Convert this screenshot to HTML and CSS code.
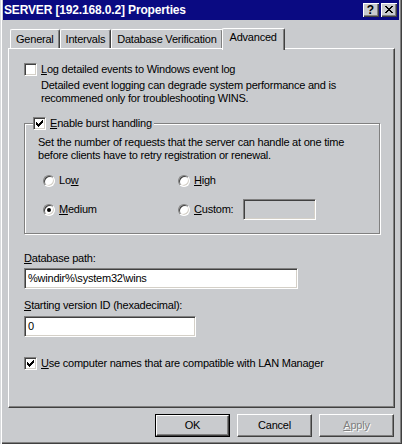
FILE: index.html
```html
<!DOCTYPE html>
<html>
<head>
<meta charset="utf-8">
<link rel="stylesheet" href="styles.css">
</head>
<body>
<div class="window">
  <div class="titlebar">
    <span class="title">SERVER [192.168.0.2] Properties</span>
    <div class="tbtns">
      <span class="tbtn help">?</span>
      <span class="tbtn close">
        <svg width="8" height="7" viewBox="0 0 8 7" shape-rendering="crispEdges">
          <path d="M0 0h2v1h-2zM6 0h2v1h-2zM1 1h2v1h-2zM5 1h2v1h-2zM2 2h4v1h-4zM3 3h2v1h-2zM2 4h4v1h-4zM1 5h2v1h-2zM5 5h2v1h-2zM0 6h2v1h-2zM6 6h2v1h-2z" fill="#000"/>
        </svg>
      </span>
    </div>
  </div>
  <div class="client">
    <div class="tabs">
      <span class="tab">General</span>
      <span class="tab">Intervals</span>
      <span class="tab">Database Verification</span>
      <span class="tab active">Advanced</span>
    </div>
    <div class="panel">
      <div class="check-row">
        <span class="cb"></span>
        <span class="lbl"><u>L</u>og detailed events to Windows event log</span>
      </div>
      <p class="note">Detailed event logging can degrade system performance and is<br>recommened only for troubleshooting WINS.</p>

      <fieldset class="group">
        <legend class="check-row legend">
          <span class="cb checked">
            <svg width="7" height="7" viewBox="0 0 7 7" shape-rendering="crispEdges"><path d="M0 2h1v3h-1zM1 3h1v3h-1zM2 4h1v3h-1zM3 3h1v3h-1zM4 2h1v3h-1zM5 1h1v3h-1zM6 0h1v3h-1z" fill="#000"/></svg>
          </span>
          <span class="lbl"><u>E</u>nable burst handling</span>
        </legend>
        <p class="group-text">Set the number of requests that the server can handle at one time<br>before clients have to retry registration or renewal.</p>
        <div class="radios">
          <div class="radio-row"><span class="rb"></span><span class="lbl">Lo<u>w</u></span></div>
          <div class="radio-row"><span class="rb"></span><span class="lbl"><u>H</u>igh</span></div>
          <div class="radio-row"><span class="rb on"></span><span class="lbl"><u>M</u>edium</span></div>
          <div class="radio-row"><span class="rb"></span><span class="lbl"><u>C</u>ustom:</span><span class="edit custom"></span></div>
        </div>
      </fieldset>

      <div class="field-label"><u>D</u>atabase path:</div>
      <div class="edit path">%windir%\system32\wins</div>
      <div class="field-label second"><u>S</u>tarting version ID (hexadecimal):</div>
      <div class="edit version">0</div>

      <div class="check-row last">
        <span class="cb checked">
          <svg width="7" height="7" viewBox="0 0 7 7" shape-rendering="crispEdges"><path d="M0 2h1v3h-1zM1 3h1v3h-1zM2 4h1v3h-1zM3 3h1v3h-1zM4 2h1v3h-1zM5 1h1v3h-1zM6 0h1v3h-1z" fill="#000"/></svg>
        </span>
        <span class="lbl"><u>U</u>se computer names that are compatible with LAN Manager</span>
      </div>
    </div>
    <div class="buttons">
      <span class="btn default"><span class="btn-in">OK</span></span>
      <span class="btn"><span class="btn-in">Cancel</span></span>
      <span class="btn disabled"><span class="btn-in"><u>A</u>pply</span></span>
    </div>
  </div>
</div>
</body>
</html>
```

FILE: styles.css
```css
* { box-sizing: border-box; }
html, body { margin: 0; padding: 0; }
body {
  width: 402px;
  height: 444px;
  overflow: hidden;
  background: #c9cbce;
  font-family: "Liberation Sans", Arial, sans-serif;
  font-size: 11px;
  line-height: 13px;
  letter-spacing: -0.22px;
  color: #000;
}
u { text-decoration: underline; text-underline-offset: 1px; text-decoration-thickness: 1px; }

.window {
  width: 402px;
  height: 444px;
  padding: 0 3px 3px 3px;
  display: flex;
  flex-direction: column;
  background: #c9cbce;
  box-shadow: inset 1px 0 0 #d8dadc, inset 2px 0 0 #ffffff, inset -1px -1px 0 #404040, inset -2px -2px 0 #808080;
}

.titlebar {
  height: 20px;
  background: #0a0a82;
  display: flex;
  align-items: center;
  justify-content: space-between;
  padding: 0 2px 0 1px;
}
.title {
  color: #fff;
  font-weight: bold;
  font-size: 12px;
  letter-spacing: -0.15px;
}
.tbtns { display: flex; gap: 2px; }
.tbtn {
  width: 16px;
  height: 14px;
  background: #c9cbce;
  box-shadow: inset 1px 1px 0 #fff, inset -1px -1px 0 #404040, inset -2px -2px 0 #808080;
  display: flex;
  align-items: center;
  justify-content: center;
  font-weight: bold;
  font-size: 12px;
  line-height: 14px;
  letter-spacing: 0;
}
.tbtn.help { padding-bottom: 1px; padding-right: 1px; }
.tbtn.close svg { display: block; margin-top: -1px; margin-left: -1px; }

.client {
  flex: 1;
  padding: 7px 4px 0 5px;
  display: flex;
  flex-direction: column;
}

.tabs {
  display: flex;
  align-items: flex-end;
  height: 21px;
  padding-left: 2px;
  position: relative;
  z-index: 1;
}
.tab {
  height: 19px;
  padding: 3px 5px 0 5px;
  border-top: 1px solid #fff;
  border-left: 1px solid #fff;
  border-right: 1px solid #404040;
  box-shadow: inset -1px 0 0 #808080;
  border-top-left-radius: 2px;
  border-top-right-radius: 2px;
  white-space: nowrap;
  background: #c9cbce;
}
.tab.active {
  height: 22px;
  margin-bottom: -2px;
  margin-left: -1px;
  padding: 2px 7px 0 7px;
}

.panel {
  height: 360px;
  border-top: 1px solid #fff;
  border-left: 1px solid #fff;
  border-right: 1px solid #404040;
  border-bottom: 1px solid #404040;
  box-shadow: inset -1px -1px 0 #808080;
  padding: 14px 14px 0 15px;
  display: flex;
  flex-direction: column;
  align-items: flex-start;
}

.check-row {
  display: flex;
  align-items: center;
  height: 13px;
  white-space: nowrap;
}
.check-row .lbl { margin-left: 4px; }
.cb {
  width: 13px;
  height: 13px;
  flex: none;
  background: #fff;
  border-top: 1px solid #808080;
  border-left: 1px solid #808080;
  border-right: 1px solid #fff;
  border-bottom: 1px solid #fff;
  box-shadow: inset 1px 1px 0 #404040, inset -1px -1px 0 #d4d0c8;
  display: flex;
  align-items: center;
  justify-content: center;
}
.cb svg { display: block; }

.note {
  margin: 3px 0 0 17px;
  white-space: nowrap;
}

.group {
  margin: 12px 0 0 0;
  width: 356px;
  height: 117px;
  padding: 0 13px 0 13px;
  border: 1px solid #808080;
  box-shadow: inset 1px 1px 0 #fff, 1px 1px 0 #fff;
  min-width: 0;
}
.legend {
  padding: 0 2px 0 0;
  margin-left: -5px;
  background: #c9cbce;
  height: 13px;
}
.group-text {
  margin: 6px 0 0 0;
  white-space: nowrap;
}
.radios {
  display: grid;
  grid-template-columns: 135px 150px;
  grid-auto-rows: 29px;
  margin: 4px 0 0 5px;
  align-items: center;
}
.radio-row {
  display: flex;
  align-items: center;
  white-space: nowrap;
}
.radio-row .lbl { margin-left: 4px; }
.rb {
  width: 12px;
  height: 12px;
  flex: none;
  border-radius: 50%;
  background: #fff;
  border: 1px solid;
  border-color: #808080 #fff #fff #808080;
  box-shadow: inset 1px 1px 0 #404040, inset -1px -1px 0 #d4d0c8;
  display: flex;
  align-items: center;
  justify-content: center;
}
.rb.on::after {
  content: "";
  width: 4px;
  height: 4px;
  border-radius: 50%;
  background: #000;
}

.edit {
  background: #fff;
  border-top: 1px solid #808080;
  border-left: 1px solid #808080;
  border-right: 1px solid #fff;
  border-bottom: 1px solid #fff;
  box-shadow: inset 1px 1px 0 #404040, inset -1px -1px 0 #d4d0c8;
  height: 21px;
  padding: 3px 3px 0 3px;
  white-space: nowrap;
}
.edit.custom {
  width: 73px;
  margin-left: 10px;
  background: #c9cbce;
}
.edit.path { width: 274px; margin-top: 3px; }
.edit.version { width: 172px; margin-top: 4px; }

.field-label { margin-top: 18px; white-space: nowrap; }
.field-label.second { margin-top: 10px; }

.check-row.last { margin-top: 20px; }

.buttons {
  display: flex;
  justify-content: flex-end;
  gap: 7px;
  margin-top: 6px;
  padding-right: 1px;
}
.btn {
  width: 75px;
  height: 23px;
  background: #c9cbce;
  border-top: 1px solid #fff;
  border-left: 1px solid #fff;
  border-right: 1px solid #404040;
  border-bottom: 1px solid #404040;
  box-shadow: inset -1px -1px 0 #808080;
  display: flex;
}
.btn-in {
  flex: 1;
  display: flex;
  align-items: center;
  justify-content: center;
}
.btn.default {
  border: 1px solid #000;
  box-shadow: none;
}
.btn.default .btn-in {
  border-top: 1px solid #fff;
  border-left: 1px solid #fff;
  border-right: 1px solid #404040;
  border-bottom: 1px solid #404040;
  box-shadow: inset -1px -1px 0 #808080;
}
.btn.disabled .btn-in {
  color: #808080;
  text-shadow: 1px 1px 0 #fff;
}
```
